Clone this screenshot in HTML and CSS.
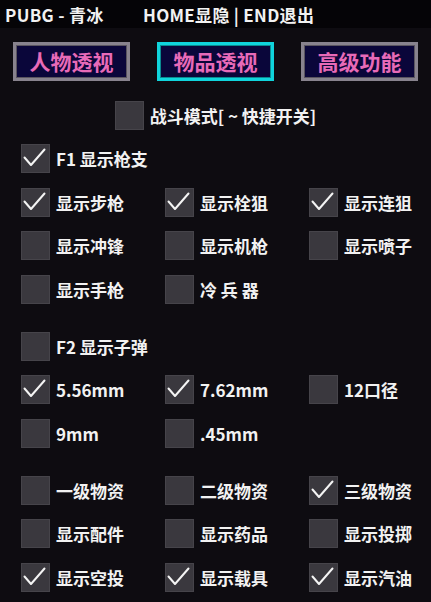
FILE: index.html
```html
<!DOCTYPE html>
<html lang="zh">
<head>
<meta charset="utf-8">
<link rel="stylesheet" href="styles.css">
</head>
<body>
<div class="titlebar">
  <span class="title-left">PUBG - 青冰</span>
  <span class="title-right">HOME显隐 | END退出</span>
</div>
<div class="tabs">
  <div class="tab">人物透视</div>
  <div class="tab active">物品透视</div>
  <div class="tab">高级功能</div>
</div>
<div class="combat">
  <span class="box"></span><span class="label">战斗模式[ ~ 快捷开关]</span>
</div>
<div class="list">
  <div class="row"><div class="item"><span class="box on"><svg viewBox="0 0 29 29"><polyline points="3.5,13.5 10,21 23.5,5.5"/></svg></span><span class="label">F1 显示枪支</span></div></div>
  <div class="row"><div class="item"><span class="box on"><svg viewBox="0 0 29 29"><polyline points="3.5,13.5 10,21 23.5,5.5"/></svg></span><span class="label">显示步枪</span></div><div class="item"><span class="box on"><svg viewBox="0 0 29 29"><polyline points="3.5,13.5 10,21 23.5,5.5"/></svg></span><span class="label">显示栓狙</span></div><div class="item"><span class="box on"><svg viewBox="0 0 29 29"><polyline points="3.5,13.5 10,21 23.5,5.5"/></svg></span><span class="label">显示连狙</span></div></div>
  <div class="row"><div class="item"><span class="box"></span><span class="label">显示冲锋</span></div><div class="item"><span class="box"></span><span class="label">显示机枪</span></div><div class="item"><span class="box"></span><span class="label">显示喷子</span></div></div>
  <div class="row"><div class="item"><span class="box"></span><span class="label">显示手枪</span></div><div class="item"><span class="box"></span><span class="label">冷 兵 器</span></div></div>
  <div class="row section"><div class="item"><span class="box"></span><span class="label">F2 显示子弹</span></div></div>
  <div class="row"><div class="item"><span class="box on"><svg viewBox="0 0 29 29"><polyline points="3.5,13.5 10,21 23.5,5.5"/></svg></span><span class="label">5.56mm</span></div><div class="item"><span class="box on"><svg viewBox="0 0 29 29"><polyline points="3.5,13.5 10,21 23.5,5.5"/></svg></span><span class="label">7.62mm</span></div><div class="item"><span class="box"></span><span class="label">12口径</span></div></div>
  <div class="row"><div class="item"><span class="box"></span><span class="label">9mm</span></div><div class="item"><span class="box"></span><span class="label">.45mm</span></div></div>
  <div class="row section"><div class="item"><span class="box"></span><span class="label">一级物资</span></div><div class="item"><span class="box"></span><span class="label">二级物资</span></div><div class="item"><span class="box on"><svg viewBox="0 0 29 29"><polyline points="3.5,13.5 10,21 23.5,5.5"/></svg></span><span class="label">三级物资</span></div></div>
  <div class="row"><div class="item"><span class="box"></span><span class="label">显示配件</span></div><div class="item"><span class="box"></span><span class="label">显示药品</span></div><div class="item"><span class="box"></span><span class="label">显示投掷</span></div></div>
  <div class="row"><div class="item"><span class="box on"><svg viewBox="0 0 29 29"><polyline points="3.5,13.5 10,21 23.5,5.5"/></svg></span><span class="label">显示空投</span></div><div class="item"><span class="box on"><svg viewBox="0 0 29 29"><polyline points="3.5,13.5 10,21 23.5,5.5"/></svg></span><span class="label">显示载具</span></div><div class="item"><span class="box on"><svg viewBox="0 0 29 29"><polyline points="3.5,13.5 10,21 23.5,5.5"/></svg></span><span class="label">显示汽油</span></div></div>
</div>
</body>
</html>
```
FILE: styles.css
```css
html, body {
  margin: 0;
  padding: 0;
  background: #0e0c11;
  width: 431px;
  height: 602px;
  overflow: hidden;
  font-family: "Noto Sans CJK SC", "Noto Sans", sans-serif;
  color: #f2f2f2;
}
.titlebar {
  height: 28px;
  background: #050407;
  display: flex;
  align-items: center;
  font-size: 17px;
  font-weight: bold;
  line-height: 1;
  padding-left: 5px;
  letter-spacing: 0.3px;
}
.title-left { width: 138px; }
.tabs {
  display: flex;
  gap: 27px;
  padding: 14px 13px 0 13px;
}
.tab {
  box-sizing: border-box;
  width: 117px;
  height: 39px;
  border: 3px solid #88838e;
  box-shadow: inset 0 0 0 1px #5a5560;
  background: #0a063a;
  color: #e86ab8;
  font-size: 21px;
  font-weight: bold;
  display: flex;
  align-items: center;
  justify-content: center;
  line-height: 1;
}
.tab.active {
  border-color: #10d4dc;
  box-shadow: inset 0 0 0 1px #0a8a90;
}
.combat {
  display: flex;
  justify-content: center;
  align-items: center;
  gap: 6px;
  margin-top: 20px;
  height: 29px;
}
.list {
  margin-top: 14px;
  padding-left: 21px;
  display: flex;
  flex-direction: column;
  gap: 14.5px;
}
.row {
  display: grid;
  grid-template-columns: 144px 144px 122px;
  height: 29px;
}
.row.section { margin-top: 13.5px; }
.item {
  display: flex;
  align-items: center;
  gap: 6px;
}
.box {
  box-sizing: border-box;
  width: 29px;
  height: 29px;
  flex: none;
  background: #3a383e;
  border: 1px solid #46444a;
  display: block;
}
.box svg {
  width: 29px;
  height: 29px;
  margin: -1px;
  display: block;
}
.box polyline {
  fill: none;
  stroke: #f4f4f4;
  stroke-width: 2;
  stroke-linecap: round;
  stroke-linejoin: round;
}
.label {
  font-size: 17px;
  font-weight: bold;
  line-height: 1;
  white-space: nowrap;
}
```
